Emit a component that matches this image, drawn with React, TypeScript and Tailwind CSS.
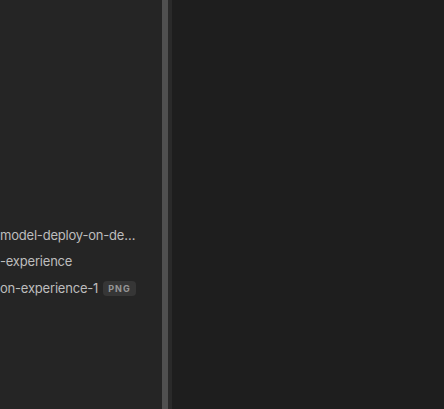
const files = [
  { name: 'model-deploy-on-de…' },
  { name: '-experience' },
  { name: 'on-experience-1', tag: 'PNG' },
];

export default function App() {
  return (
    <div className="flex h-[409px] w-[444px] overflow-hidden bg-[#1e1e1e]" style={{ fontFamily: 'Inter, "Noto Sans", sans-serif' }}>
      {/* Sidebar */}
      <div className="w-[162px] shrink-0 bg-[#252525] pt-[222px]">
        {files.map((f) => (
          <div key={f.name} className="flex h-[26.5px] items-center gap-[5px] whitespace-nowrap text-[13px] tracking-[-0.2px] text-[#bdbdbd]">
            <span>{f.name}</span>
            {f.tag && (
              <span className="rounded-[4px] bg-[#363636] px-[5px] py-[1px] text-[9px] font-bold tracking-[0.12em] text-[#969696]">
                {f.tag}
              </span>
            )}
          </div>
        ))}
      </div>
      {/* Splitter */}
      <div className="w-[6px] shrink-0 bg-[#505050]" />
      <div className="w-[4px] shrink-0 bg-[#2a2a2a]" />
      {/* Editor */}
      <div className="flex-1 bg-[#1e1e1e]" />
    </div>
  );
}
